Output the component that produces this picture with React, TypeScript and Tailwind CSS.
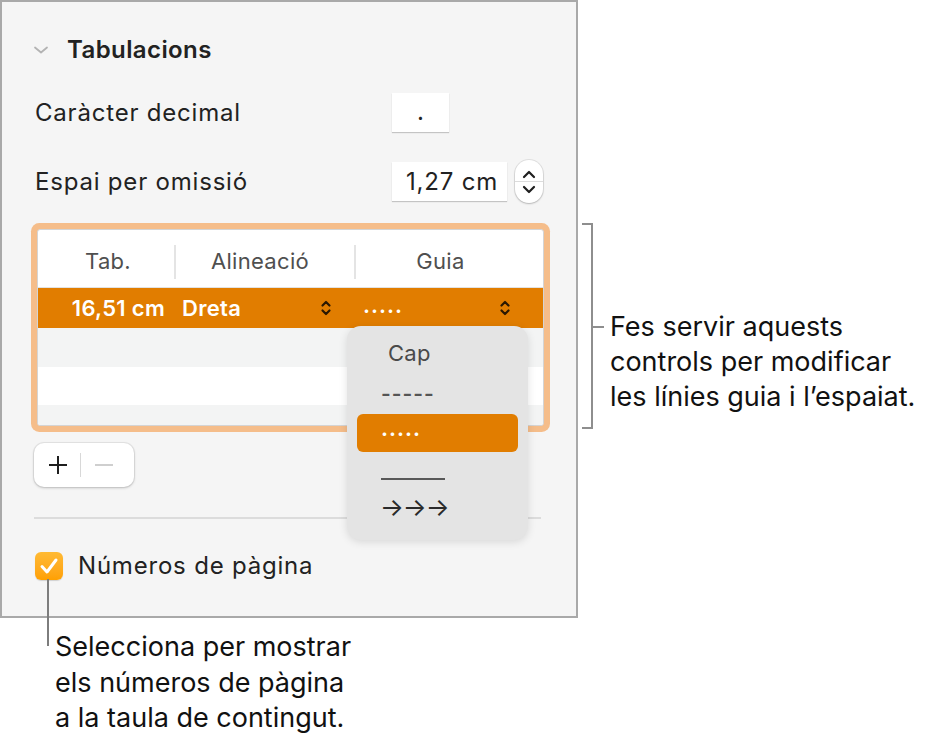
import React from 'react'

function UpDown({ className }: { className?: string }) {
  return (
    <svg width="12" height="18" viewBox="0 0 12 18" className={className}>
      <path d="M2.5 6.5 L6 3 L9.5 6.5" fill="none" stroke="currentColor" strokeWidth="2.2" strokeLinecap="round" strokeLinejoin="round" />
      <path d="M2.5 11.5 L6 15 L9.5 11.5" fill="none" stroke="currentColor" strokeWidth="2.2" strokeLinecap="round" strokeLinejoin="round" />
    </svg>
  )
}

function Stepper() {
  return (
    <div className="ml-[8px] flex h-[43px] w-[28px] flex-col items-center rounded-full bg-white shadow-[0_0_0_1px_rgba(0,0,0,0.08),0_1px_2px_rgba(0,0,0,0.2)]">
      <div className="flex h-[21px] items-end justify-center pb-[2px]">
        <svg width="14" height="9" viewBox="0 0 14 9">
          <path d="M2 7 L7 2 L12 7" fill="none" stroke="#1f1f1f" strokeWidth="2.2" strokeLinecap="round" strokeLinejoin="round" />
        </svg>
      </div>
      <div className="h-px w-full bg-[#dcdcdc]" />
      <div className="flex h-[21px] items-start justify-center pt-[3px]">
        <svg width="14" height="9" viewBox="0 0 14 9">
          <path d="M2 2 L7 7 L12 2" fill="none" stroke="#1f1f1f" strokeWidth="2.2" strokeLinecap="round" strokeLinejoin="round" />
        </svg>
      </div>
    </div>
  )
}

function LeaderMenu() {
  return (
    <div className="absolute left-[345px] top-[324px] flex h-[214px] w-[181px] flex-col rounded-[14px] bg-[#e4e4e4] shadow-[0_2px_8px_rgba(0,0,0,0.12)]">
      <div className="flex h-[52px] items-center pl-[41px] pt-[2px] text-[22px] tracking-[0.3px] text-[#4a4a4a]">Cap</div>
      <div className="flex h-[32px] items-center pl-[34px] text-[21px] font-semibold tracking-[1px] text-[#555]">
        -----
      </div>
      <div className="mx-[10px] mt-[4px] flex h-[38px] items-center rounded-[6px] bg-[#e17d00] pl-[24px] text-[21px] font-bold tracking-[1px] text-white">
        <span className="-mt-[8px]">.....</span>
      </div>
      <div className="flex h-[44px] items-start pl-[34px]">
        <svg width="64" height="10" viewBox="0 0 64 10" className="mt-[22px]">
          <path d="M0 5 H64" stroke="#2a2a2a" strokeWidth="1.6" />
        </svg>
      </div>
      <div className="flex h-[22px] items-center pl-[33px] text-[25px] leading-none tracking-[-1px] text-[#2a2a2a]">
        →→→
      </div>
    </div>
  )
}

function TabsTable() {
  return (
    <div className="ml-[35px] mt-[26px] h-[197px] w-[507px] overflow-hidden rounded-[3px] border border-[#d4d4d4] bg-white shadow-[0_0_0_6px_#f5bd8a]">
      <div className="flex h-[58px] items-center border-b border-[#e2e2e2] pt-[6px] text-[22px] tracking-[0.3px] text-[#4f4f4f]">
        <div className="flex w-[136px] justify-center pl-[4px]">Tab.</div>
        <div className="h-[34px] w-[2px] bg-[#e4e4e4]" />
        <div className="flex w-[178px] justify-center pr-[10px]">Alineació</div>
        <div className="h-[34px] w-[2px] bg-[#e4e4e4]" />
        <div className="flex flex-1 justify-center pr-[18px]">Guia</div>
      </div>
      <div className="flex h-[40px] items-center bg-[#e17d00] text-[22px] font-semibold tracking-[0.3px] text-white">
        <div className="flex w-[136px] justify-end pr-[9px]">16,51 cm</div>
        <div className="flex w-[180px] items-center justify-between pl-[8px] pr-[22px]">
          <span>Dreta</span>
          <UpDown className="text-[#2b1800]" />
        </div>
        <div className="flex flex-1 items-center justify-between pl-[9px] pr-[32px]">
          <span className="-mt-[6px] tracking-[1px]">.....</span>
          <UpDown className="text-[#2b1800]" />
        </div>
      </div>
      <div className="h-[39px] bg-[#f3f4f4]" />
      <div className="h-[38px] bg-white" />
      <div className="h-[22px] bg-[#f3f4f4]" />
    </div>
  )
}

function Panel() {
  return (
    <div className="relative h-[618px] w-[578px] shrink-0 border-2 border-[#a9a9a9] bg-[#f5f5f5] text-[#222]">
      <div className="box-content flex h-[30px] items-center pl-[31px] pt-[33px]">
        <svg width="16" height="10" viewBox="0 0 16 10">
          <path d="M2 2.5 L8 7.5 L14 2.5" fill="none" stroke="#b3b3b3" strokeWidth="1.8" strokeLinecap="round" strokeLinejoin="round" />
        </svg>
        <span className="ml-[18px] text-[24px] font-semibold tracking-[0.4px]">Tabulacions</span>
      </div>
      <div className="mt-[28px] flex h-[39px] items-center pl-[33px]">
        <span className="w-[357px] text-[24px] tracking-[0.8px]">Caràcter decimal</span>
        <div className="flex h-[39px] w-[57px] justify-center bg-white pt-[1px] text-[24px] shadow-[0_1px_1px_rgba(0,0,0,0.2)]">.</div>
      </div>
      <div className="mt-[28px] flex h-[43px] items-center pl-[33px]">
        <span className="w-[357px] text-[24px] tracking-[0.8px]">Espai per omissió</span>
        <div className="flex h-[39px] w-[115px] items-center justify-end bg-white pr-[9px] text-[24px] tracking-[0.8px] shadow-[0_1px_1px_rgba(0,0,0,0.2)]">
          1,27 cm
        </div>
        <Stepper />
      </div>
      <TabsTable />
      <div className="ml-[32px] mt-[17px] flex h-[44px] w-[100px] items-center rounded-[10px] bg-white shadow-[0_0_0_1px_rgba(0,0,0,0.06),0_1px_3px_rgba(0,0,0,0.2)]">
        <div className="flex w-[46px] justify-center pl-[2px]">
          <svg width="20" height="20" viewBox="0 0 20 20">
            <path d="M10 1 V19 M1 10 H19" stroke="#1f1f1f" strokeWidth="2" />
          </svg>
        </div>
        <div className="h-[24px] w-px bg-[#d8d8d8]" />
        <div className="flex w-[46px] justify-center">
          <svg width="20" height="4" viewBox="0 0 20 4">
            <path d="M1 2 H19" stroke="#c4c4c4" strokeWidth="1.6" />
          </svg>
        </div>
      </div>
      <div className="ml-[32px] mt-[30px] h-[2px] w-[507px] bg-[#dcdcdc]" />
      <div className="mt-[33px] flex h-[28px] items-center pl-[33px]">
        <div className="flex h-[28px] w-[28px] items-center justify-center rounded-[6px] bg-gradient-to-b from-[#ffba33] to-[#ffa000] shadow-[0_1px_1px_rgba(0,0,0,0.15)]">
          <svg width="20" height="18" viewBox="0 0 20 18">
            <path d="M3 9.5 L8 15 L17 3" fill="none" stroke="white" strokeWidth="3" strokeLinecap="round" strokeLinejoin="round" />
          </svg>
        </div>
        <span className="ml-[15px] text-[24px] leading-none tracking-[0.8px]">Números de pàgina</span>
      </div>
      <LeaderMenu />
    </div>
  )
}

export default function App() {
  return (
    <div className="relative h-[742px] w-[929px] overflow-hidden bg-white font-['Inter',sans-serif]">
      <div className="flex">
        <Panel />
        <div className="flex pl-[4px] pt-[223px]">
          <div className="h-[206px] w-[11px] border-y-2 border-r-2 border-[#8e8e8e]" />
          <div className="mt-[86px] flex items-start">
            <div className="mt-[17px] h-[2px] w-[11px] bg-[#8e8e8e]" />
            <div className="ml-[6px] text-[27px] leading-[35px] text-[#111]">
              Fes servir aquests
              <br />
              controls per modificar
              <br />
              les línies guia i l’espaiat.
            </div>
          </div>
        </div>
      </div>
      <div className="pl-[55px] pt-[11px] text-[27px] leading-[35.5px] text-[#111]">
        Selecciona per mostrar
        <br />
        els números de pàgina
        <br />
        a la taula de contingut.
      </div>
      <div className="absolute left-[47px] top-[579px] h-[67px] w-[2px] bg-[#7d7d7d]" />
    </div>
  )
}
